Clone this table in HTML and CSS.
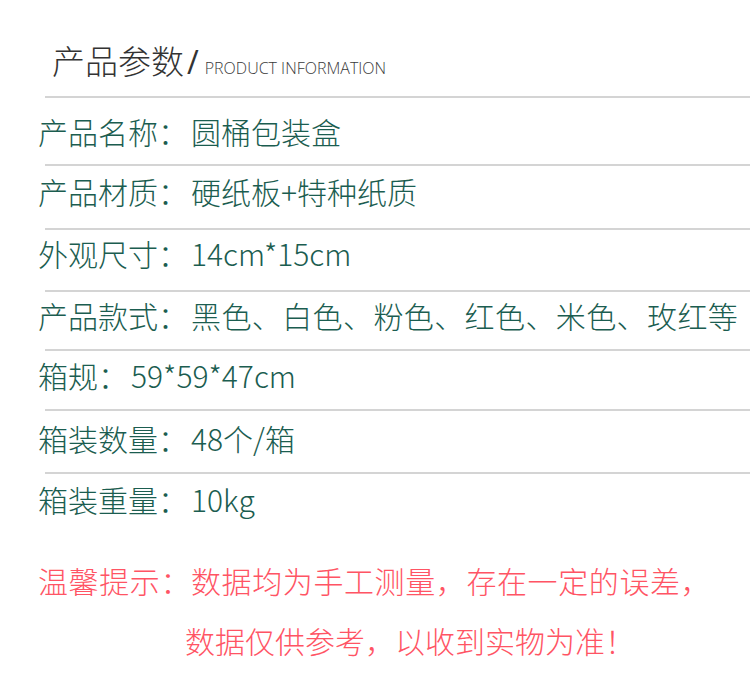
FILE: index.html
```html
<!DOCTYPE html>
<html lang="zh-CN">
<head>
<meta charset="utf-8">
<title>产品参数</title>
<link rel="stylesheet" href="styles.css">
</head>
<body>
<div class="page">
  <header class="head">
    <h1 class="head-title">产品参数</h1>
    <span class="head-slash">/</span>
    <span class="head-sub">PRODUCT INFORMATION</span>
  </header>
  <div class="rule"></div>
  <div class="row r1"><span class="label">产品名称：</span>圆桶包装盒</div>
  <div class="rule"></div>
  <div class="row r2"><span class="label">产品材质：</span>硬纸板+特种纸质</div>
  <div class="rule"></div>
  <div class="row r3"><span class="label">外观尺寸：</span>14cm*15cm</div>
  <div class="rule"></div>
  <div class="row r4"><span class="label">产品款式：</span><span class="wide">黑色、白色、粉色、红色、米色、玫红等</span></div>
  <div class="rule"></div>
  <div class="row r5"><span class="label">箱规：</span>59*59*47cm</div>
  <div class="rule"></div>
  <div class="row r6"><span class="label">箱装数量：</span>48个/箱</div>
  <div class="rule"></div>
  <div class="row r7"><span class="label">箱装重量：</span>10kg</div>
  <div class="note">
    <p class="note-line note-first">温馨提示：数据均为手工测量，存在一定的误差，</p>
    <p class="note-line note-indent">数据仅供参考，以收到实物为准！</p>
  </div>
</div>
</body>
</html>
```

FILE: styles.css
```css
html, body {
  margin: 0;
  padding: 0;
  background: #ffffff;
}

.page {
  width: 750px;
  height: 685px;
  overflow: hidden;
  font-family: "Noto Sans CJK SC Light", "Noto Sans CJK SC DemiLight", "Noto Sans CJK SC", "Noto Sans", sans-serif;
  font-weight: 300;
}

.head {
  display: flex;
  align-items: baseline;
  height: 96px;
  box-sizing: border-box;
  padding: 40px 0 0 52px;
  color: #333333;
}

.head-title {
  margin: 0;
  font-size: 33px;
  line-height: 40px;
  font-weight: 300;
}

.head-slash {
  font-family: "Open Sans", sans-serif;
  font-weight: 400;
  font-size: 32px;
  line-height: 40px;
  margin: 0 6px 0 3px;
}

.head-sub {
  font-family: "Open Sans", sans-serif;
  font-size: 16px;
  color: #3a3a3a;
}

.rule {
  height: 2px;
  margin-left: 45px;
  background: #d4d4d4;
}

.row {
  padding-left: 38px;
  font-size: 30px;
  line-height: 36px;
  color: #1b5d50;
  white-space: nowrap;
}

.label {
  padding-right: 3px;
}

.wide {
  letter-spacing: 0.4px;
}

.r1 { padding-top: 15px; padding-bottom: 15px; }
.r2 { padding-top: 7px; padding-bottom: 19px; }
.r3 { padding-top: 5px; padding-bottom: 19px; }
.r4 { padding-top: 5px; padding-bottom: 16px; }
.r5 { padding-top: 6px; padding-bottom: 16px; }
.r6 { padding-top: 9px; padding-bottom: 16px; }
.r7 { padding-top: 7px; padding-bottom: 0; }

.note {
  padding: 45px 0 0 38px;
  color: #ff5464;
  font-size: 30px;
  line-height: 36px;
}

.note-line {
  margin: 0;
  white-space: nowrap;
}

.note-first {
  letter-spacing: 0.6px;
}

.note-indent {
  margin-top: 24px;
  padding-left: 147px;
}
```
